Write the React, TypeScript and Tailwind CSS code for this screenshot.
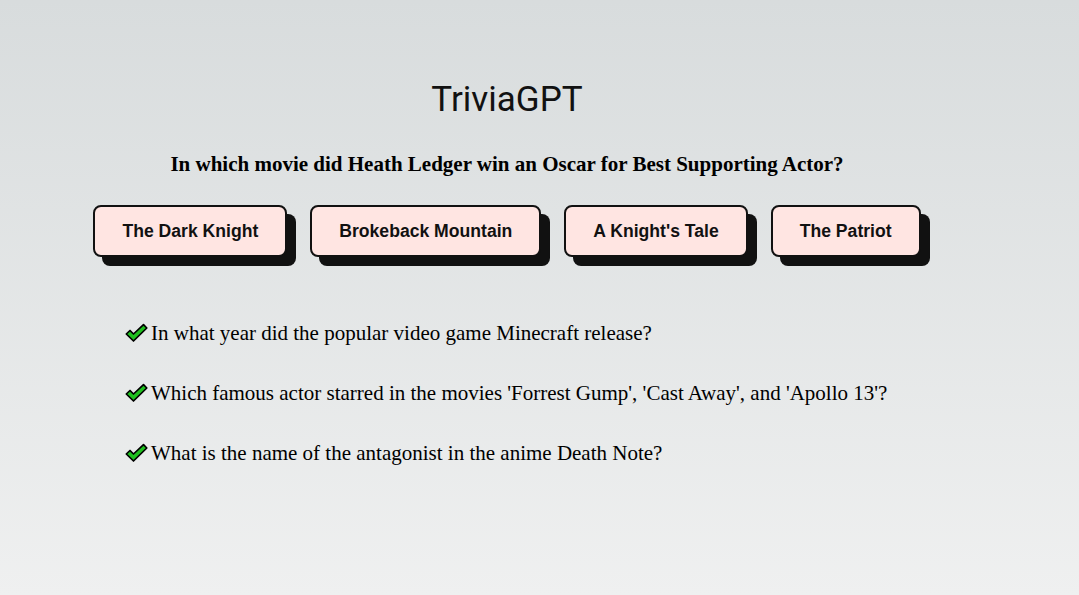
import React from "react";

const Check = () => (
  <svg width="23" height="20" viewBox="0 0 23 20" className="shrink-0">
    <path
      d="M1.3 11 L5 7.5 L8.5 11 L18.5 1.6 L21.8 5 L8.5 18 Z"
      fill="#1fc01f"
      stroke="#000"
      strokeWidth="1.7"
      strokeLinejoin="round"
    />
  </svg>
);

const answers = ["The Dark Knight", "Brokeback Mountain", "A Knight's Tale", "The Patriot"];
const history = [
  "In what year did the popular video game Minecraft release?",
  "Which famous actor starred in the movies 'Forrest Gump', 'Cast Away', and 'Apollo 13'?",
  "What is the name of the antagonist in the anime Death Note?",
];

export default function App() {
  return (
    <div className="w-[1079px] h-[595px] bg-gradient-to-b from-[#d8dcdd] to-[#eff0f0] overflow-hidden">
      <div className="w-[1014px] flex flex-col items-center pt-[78px]">
        <h1 className="text-[35px] leading-[44px] text-[#111] font-['Roboto',sans-serif]">TriviaGPT</h1>
        <p className="mt-[30px] text-[21px] leading-[24px] font-bold text-black font-['Liberation_Serif',serif]">
          In which movie did Heath Ledger win an Oscar for Best Supporting Actor?
        </p>
        <div className="mt-[29px] flex gap-[23px]">
          {answers.map((a) => (
            <button
              key={a}
              className="h-[52px] px-[27px] rounded-[8px] border-2 border-[#111] bg-[#ffe5e2] shadow-[9px_9px_0_#111] text-[17.6px] font-bold text-[#111] font-['Liberation_Sans',sans-serif]"
            >
              {a}
            </button>
          ))}
        </div>
      </div>
      <div className="mt-[64px] ml-[125px] flex flex-col gap-[36px] font-['Liberation_Serif',serif] text-[21px] leading-[24px] text-black">
        {history.map((h) => (
          <div key={h} className="flex items-center gap-[3px]">
            <Check />
            <span>{h}</span>
          </div>
        ))}
      </div>
    </div>
  );
}
